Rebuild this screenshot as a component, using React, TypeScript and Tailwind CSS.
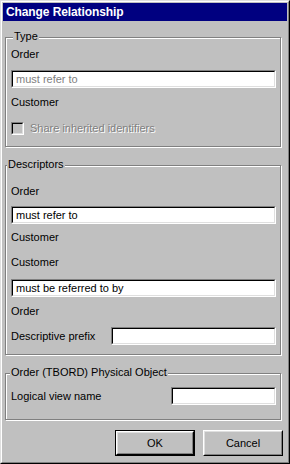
import React from 'react';

interface GroupProps {
  title: string;
  titleLeft: string;
  className?: string;
  children: React.ReactNode;
}

// etched group box: dark line with a white line below/right of it
function GroupBox({ title, titleLeft, className, children }: GroupProps) {
  return (
    <div
      className={`relative ml-[2px] mr-[6px] border border-[#808080] shadow-[1px_1px_0_#ffffff,inset_1px_1px_0_#ffffff] ${className ?? ''}`}
    >
      <span className={`absolute top-[-8px] ${titleLeft} bg-[#c0c0c0] px-px leading-[13px]`}>{title}</span>
      {children}
    </div>
  );
}

function TextField({ value, disabled, className }: { value?: string; disabled?: boolean; className?: string }) {
  return (
    <div className={`h-[18px] border border-t-[#808080] border-l-[#808080] border-b-white border-r-white ${className ?? ''}`}>
      <div className="h-full border border-t-black border-l-black border-b-[#dfdfdf] border-r-[#dfdfdf] bg-white flex items-center pl-[3px]">
        <span className={`leading-[13px] whitespace-nowrap ${disabled ? 'text-[#808080]' : 'text-black'}`}>{value}</span>
      </div>
    </div>
  );
}

function Label({ children, className }: { children: React.ReactNode; className?: string }) {
  return <div className={`h-[13px] leading-[13px] whitespace-nowrap ${className ?? ''}`}>{children}</div>;
}

function Button({ label, isDefault }: { label: string; isDefault?: boolean }) {
  const face = (
    <div className="h-full border border-t-white border-l-white border-b-black border-r-black">
      <div className="h-full border border-t-[#dfdfdf] border-l-[#dfdfdf] border-b-[#808080] border-r-[#808080] flex items-center justify-center">
        <span className="leading-[13px]">{label}</span>
      </div>
    </div>
  );
  return (
    <div className={`w-[80px] h-[26px] ${isDefault ? 'border border-black' : ''}`}>{face}</div>
  );
}

export default function App() {
  return (
    <div className="w-[290px] h-[464px] bg-[#c0c0c0] border border-t-[#dfdfdf] border-l-[#dfdfdf] border-b-black border-r-black font-['Liberation_Sans',Arial,sans-serif] text-[11px] text-black">
      <div className="h-full border border-t-white border-l-white border-b-[#808080] border-r-[#808080] p-px flex flex-col">
        {/* Title bar */}
        <div className="h-[18px] bg-[#000080] flex items-center pl-[3px]">
          <span className="text-white font-bold text-[12px] leading-[14px] tracking-[-0.1px]">Change Relationship</span>
        </div>

        {/* Type */}
        <GroupBox title="Type" titleLeft="left-[7px]" className="mt-[16px] h-[110px]">
          <div className="pt-[10px] pl-[5px] pr-[4px] flex flex-col">
            <Label>Order</Label>
            <TextField value="must refer to" disabled className="mt-[9px]" />
            <Label className="mt-[8px]">Customer</Label>
            <div className="mt-[13px] h-[13px] flex items-center gap-[6px]">
              <div className="w-[13px] h-[13px] border border-t-[#808080] border-l-[#808080] border-b-white border-r-white">
                <div className="h-full border border-t-black border-l-black border-b-[#dfdfdf] border-r-[#dfdfdf] bg-[#c0c0c0]" />
              </div>
              <span className="leading-[13px] text-[#808080] [text-shadow:1px_1px_0_#ffffff]">Share inherited identifiers</span>
            </div>
          </div>
        </GroupBox>

        {/* Descriptors */}
        <GroupBox title="Descriptors" titleLeft="left-[1px]" className="mt-[18px] h-[190px]">
          <div className="pt-[19px] pl-[5px] pr-[4px] flex flex-col">
            <Label>Order</Label>
            <TextField value="must refer to" className="mt-[8px]" />
            <Label className="mt-[7px]">Customer</Label>
            <Label className="mt-[12px]">Customer</Label>
            <TextField value="must be referred to by" className="mt-[10px]" />
            <Label className="mt-[8px]">Order</Label>
            <div className="mt-[9px] flex items-center">
              <Label className="w-[100px]">Descriptive prefix</Label>
              <TextField className="flex-1" />
            </div>
          </div>
        </GroupBox>

        {/* Physical object */}
        <GroupBox title="Order (TBORD) Physical Object" titleLeft="left-[4px]" className="mt-[18px] h-[47px]">
          <div className="pt-[13px] pl-[5px] pr-[4px] flex items-center">
            <Label className="w-[160px]">Logical view name</Label>
            <TextField className="flex-1" />
          </div>
        </GroupBox>

        {/* Buttons */}
        <div className="mt-[10px] mr-[4px] flex justify-end gap-[8px]">
          <Button label="OK" isDefault />
          <Button label="Cancel" />
        </div>
      </div>
    </div>
  );
}
